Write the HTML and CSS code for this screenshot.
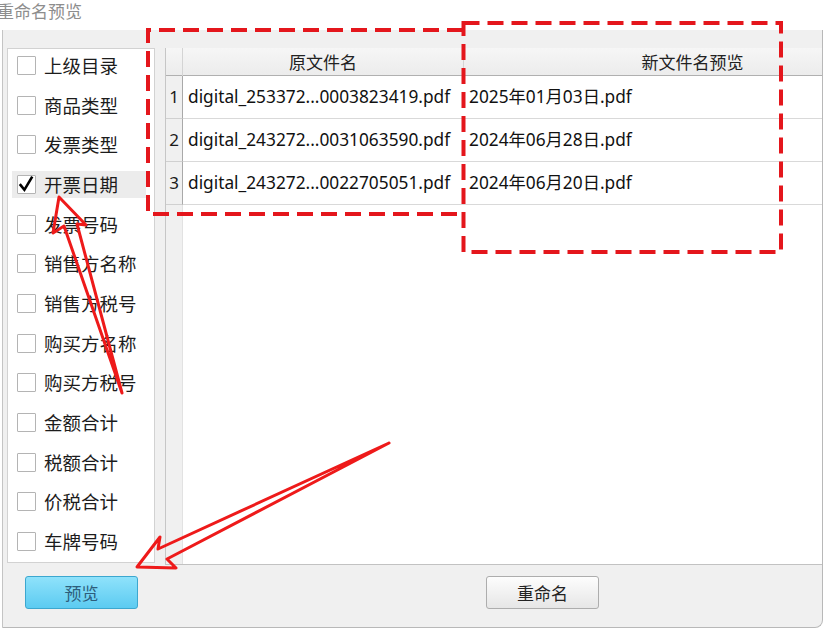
FILE: index.html
```html
<!DOCTYPE html>
<html lang="zh-CN">
<head>
<meta charset="utf-8">
<title>重命名预览</title>
<link rel="stylesheet" href="styles.css">
</head>
<body>
<div class="page">
  <div class="titlebar">重命名预览</div>
  <div class="dialog">
    <div class="main">
      <div class="checklist">
        <div class="item"><div class="row"><span class="box"></span><span class="lbl">上级目录</span></div></div>
        <div class="item"><div class="row"><span class="box"></span><span class="lbl">商品类型</span></div></div>
        <div class="item"><div class="row"><span class="box"></span><span class="lbl">发票类型</span></div></div>
        <div class="item"><div class="row hl"><span class="box"><svg class="check" viewBox="0 0 19 19"><path d="M3.6 10.2 L7.4 14.8 L14.6 2.8"/></svg></span><span class="lbl">开票日期</span></div></div>
        <div class="item"><div class="row"><span class="box"></span><span class="lbl">发票号码</span></div></div>
        <div class="item"><div class="row"><span class="box"></span><span class="lbl">销售方名称</span></div></div>
        <div class="item"><div class="row"><span class="box"></span><span class="lbl">销售方税号</span></div></div>
        <div class="item"><div class="row"><span class="box"></span><span class="lbl">购买方名称</span></div></div>
        <div class="item"><div class="row"><span class="box"></span><span class="lbl">购买方税号</span></div></div>
        <div class="item"><div class="row"><span class="box"></span><span class="lbl">金额合计</span></div></div>
        <div class="item"><div class="row"><span class="box"></span><span class="lbl">税额合计</span></div></div>
        <div class="item"><div class="row"><span class="box"></span><span class="lbl">价税合计</span></div></div>
        <div class="item"><div class="row"><span class="box"></span><span class="lbl">车牌号码</span></div></div>
      </div>
      <div class="table">
        <div class="trow head">
          <div class="num"></div>
          <div class="hcell">原文件名</div>
          <div class="hcell">新文件名预览</div>
        </div>
        <div class="trow data">
          <div class="num">1</div>
          <div class="cell">digital_253372...0003823419.pdf</div>
          <div class="cell">2025年01月03日.pdf</div>
        </div>
        <div class="trow data">
          <div class="num">2</div>
          <div class="cell">digital_243272...0031063590.pdf</div>
          <div class="cell">2024年06月28日.pdf</div>
        </div>
        <div class="trow data">
          <div class="num">3</div>
          <div class="cell">digital_243272...0022705051.pdf</div>
          <div class="cell">2024年06月20日.pdf</div>
        </div>
        <div class="trow filler">
          <div class="num"></div>
          <div></div>
          <div></div>
        </div>
      </div>
    </div>
    <div class="footer">
      <button class="btn btn-preview">预览</button>
      <button class="btn btn-rename">重命名</button>
    </div>
  </div>
  <svg class="annot" width="825" height="632" viewBox="0 0 825 632">
    <g class="dash">
      <path d="M463 30 L148 30 L148 214 L463 214"/>
      <rect x="463.5" y="23" width="317.5" height="229"/>
    </g>
    <g class="arrow">
      <path d="M53 233 L59 197 L86 225 L77 224 L122 393 L64 226 Z"/>
      <path d="M137 567 L160 537 L158 549 L389 443 L167 559 L176 568 Z"/>
    </g>
  </svg>
</div>
</body>
</html>
```

FILE: styles.css
```css
* { box-sizing: border-box; }
html, body { margin: 0; padding: 0; }
body {
  width: 825px;
  height: 632px;
  overflow: hidden;
  background: #ffffff;
  font-family: "Noto Sans", "Noto Sans CJK SC", sans-serif;
  color: #1a1a1a;
}
.page {
  position: relative;
  width: 825px;
  height: 632px;
}
.titlebar {
  height: 30px;
  margin-left: -3px;
  font-family: "Noto Sans CJK SC", sans-serif;
  font-size: 17px;
  line-height: 22px;
  color: #8d8d8d;
}
.dialog {
  margin-left: 2px;
  width: 821px;
  height: 598px;
  background: #f0f0f0;
  border-left: 1px solid #c4c4c4;
  border-right: 1px solid #b8b8b8;
  border-bottom: 1px solid #b8b8b8;
  border-bottom-right-radius: 8px;
  display: flex;
  flex-direction: column;
}
.main {
  display: flex;
  height: 535px;
  padding: 18px 0 0 4px;
  gap: 10px;
}
.checklist {
  width: 148px;
  height: 515px;
  background: #ffffff;
  border: 1px solid #d2d2d2;
  flex: none;
  overflow: hidden;
}
.item {
  height: 39.67px;
  padding: 3px 0 0 4px;
}
.row {
  display: flex;
  align-items: center;
  height: 27px;
  width: 134px;
  padding-left: 5px;
  gap: 8px;
}
.row.hl { background: #ececec; }
.box {
  width: 19px;
  height: 19px;
  flex: none;
  background: #ffffff;
  border: 1px solid #b4b4b4;
  border-radius: 1px;
  position: relative;
}
.check {
  position: absolute;
  left: -1px;
  top: -1px;
  width: 19px;
  height: 19px;
}
.check path {
  fill: none;
  stroke: #000000;
  stroke-width: 2.6;
  stroke-linecap: square;
}
.lbl {
  font-family: "Noto Sans CJK SC", sans-serif;
  font-size: 18.5px;
  line-height: 27px;
  color: #1c1c1c;
  white-space: nowrap;
}
.table {
  flex: 1;
  height: 517px;
  background: #ffffff;
  border-left: 1px solid #c6c6c6;
  border-bottom: 1px solid #c2c2c2;
  display: flex;
  flex-direction: column;
  overflow: hidden;
}
.trow {
  display: grid;
  grid-template-columns: 17px 281px 458px;
  flex: none;
}
.head {
  height: 28px;
  background: linear-gradient(#f6f6f6, #ececec);
  border-bottom: 1px solid #b0b0b0;
}
.head .num { background: transparent; border-right: 1px solid #d4d4d4; }
.hcell {
  text-align: center;
  font-family: "Noto Sans CJK SC", sans-serif;
  font-size: 17px;
  line-height: 28px;
  color: #222222;
  border-right: 1px solid #d4d4d4;
}
.data {
  height: 43px;
}
.num {
  background: #f0f0f0;
  border-right: 1px solid #a9a9a9;
  font-size: 17px;
  line-height: 42px;
  text-align: center;
  color: #1a1a1a;
}
.data .num { border-bottom: 1px solid #d0d0d0; }
.cell {
  border-bottom: 1px solid #d9d9d9;
  padding-left: 5px;
  font-size: 17.3px;
  line-height: 42px;
  color: #111111;
  white-space: nowrap;
  overflow: hidden;
}
.filler { flex: 1; }
.filler .num { border-right: 1px solid #e2e2e2; }
.footer {
  flex: 1;
  display: flex;
  align-items: flex-start;
  padding: 11px 0 0 22px;
}
.btn {
  height: 33px;
  width: 113px;
  border-radius: 3px;
  font-family: "Noto Sans CJK SC", sans-serif;
  font-size: 17px;
  padding: 0;
  cursor: default;
}
.btn-preview {
  background: linear-gradient(#8fe2fb, #5ccbf1);
  border: 1px solid #3ca7cf;
  color: #2d5e7c;
}
.btn-rename {
  margin-left: 348px;
  background: linear-gradient(#fdfdfd, #e6e6e6);
  border: 1px solid #adadad;
  color: #222222;
}
.annot {
  position: absolute;
  left: 0;
  top: 0;
  pointer-events: none;
}
.dash path, .dash rect {
  fill: none;
  stroke: #e4161c;
  stroke-width: 4;
  stroke-dasharray: 16 8;
}
.arrow path {
  fill: none;
  stroke: #ee1a1a;
  stroke-width: 3;
  stroke-linejoin: round;
  stroke-linecap: round;
}
```
